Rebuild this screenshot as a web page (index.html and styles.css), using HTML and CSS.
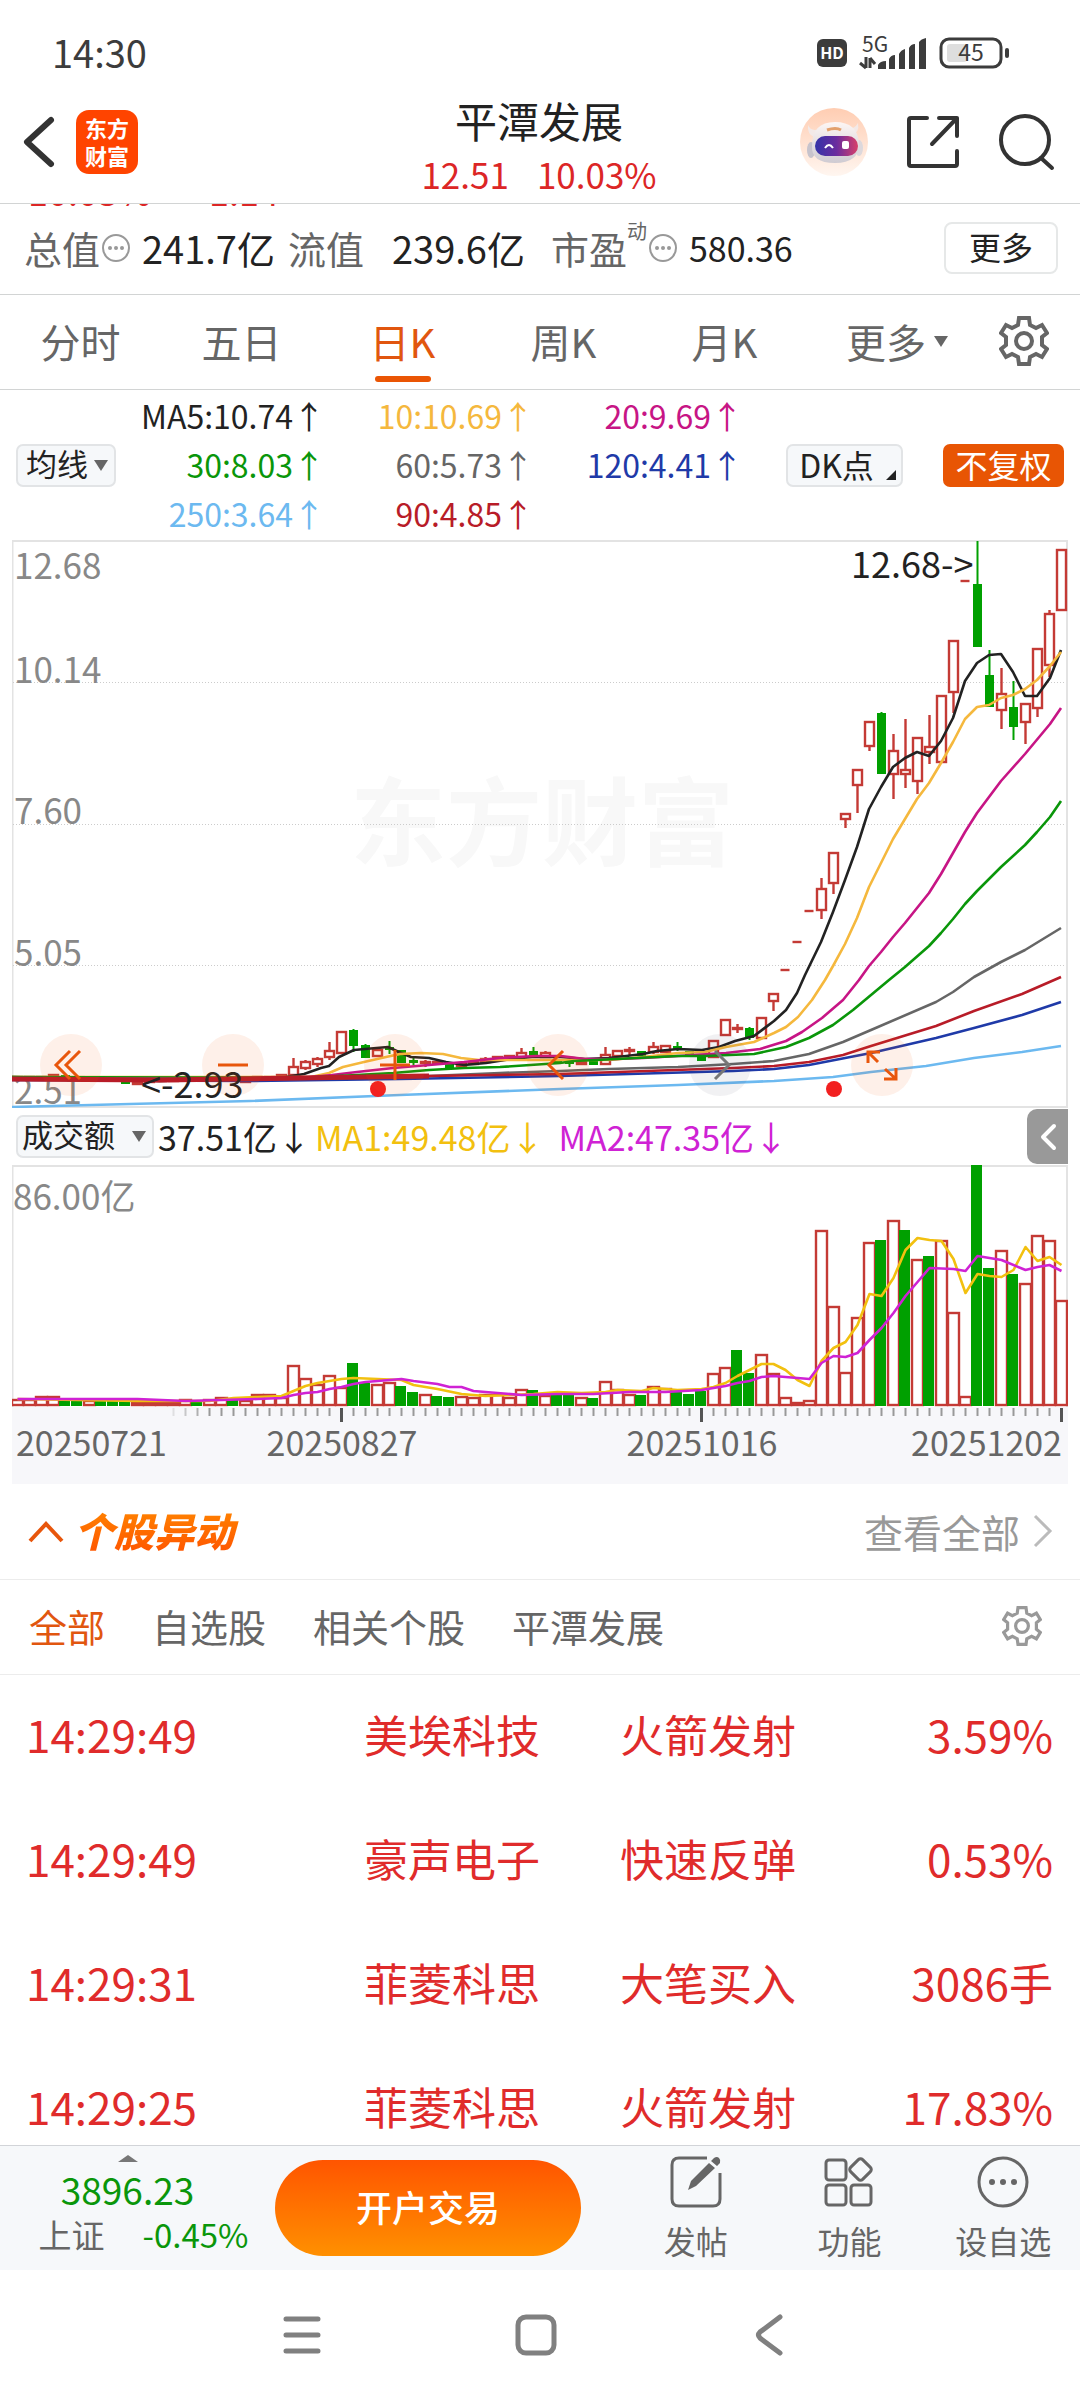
FILE: index.html
```html
<!DOCTYPE html>
<html lang="zh-CN">
<head>
<meta charset="utf-8">
<meta name="viewport" content="width=device-width, initial-scale=1">
<title>平潭发展 12.51 10.03%</title>
<link rel="stylesheet" href="styles.css">
</head>
<body>
<div class="status-bar">
  <time>14:30</time>
  <svg class="status-icons" viewBox="810 30 205 42" aria-hidden="true">
    <rect x="817" y="38" width="30" height="28" rx="6" fill="#3c3c3c"/>
    <text x="832" y="58" font-size="16" font-weight="700" fill="#fff" text-anchor="middle">HD</text>
    <text x="862" y="51" font-size="21" fill="#3c3c3c">5G</text>
    <path d="M866 56v11M860 62l6 5M870 67V57M870 57l5 6" stroke="#3c3c3c" stroke-width="3" fill="none"/>
    <path d="M878 68v-4q2-4 8-4v8zM889 68V58q2-4 6-4v14zM899 68V53q2-4 6-5v20zM909 68V47q2-4 6-4v25zM919 68V41q2-3 7-4v31z" fill="#3c3c3c"/>
    <rect x="947" y="43" width="20" height="18" rx="3" fill="#dedede"/>
    <rect x="941" y="38" width="60" height="28" rx="8" fill="none" stroke="#3c3c3c" stroke-width="3"/>
    <rect x="1005" y="47" width="4" height="10" rx="2" fill="#3c3c3c"/>
    <text x="971" y="60" font-size="23" fill="#3c3c3c" text-anchor="middle">45</text>
  </svg>
</div>

<header class="header">
  <div class="header-left">
    <button class="icon-button" aria-label="返回"><svg width="34" height="54" viewBox="0 0 34 54"><path d="M29 5 5 27l24 22" fill="none" stroke="#333" stroke-width="6" stroke-linecap="round" stroke-linejoin="round"/></svg></button>
    <a class="logo" href="#home"><span>东方</span><span>财富</span></a>
  </div>
  <div class="header-title">
    <h1>平潭发展</h1>
    <p><span>12.51</span><span>10.03%</span></p>
  </div>
  <div class="header-right">
    <button class="icon-button" aria-label="助手">
      <svg width="68" height="68" viewBox="0 0 68 68">
        <defs>
          <linearGradient id="halo" x1="0" y1="0" x2="0" y2="1"><stop offset="0" stop-color="#ffcdb2"/><stop offset="1" stop-color="#fff6f0"/></linearGradient>
          <linearGradient id="visor" x1="0" y1="0" x2="1" y2="0"><stop offset="0" stop-color="#3433a8"/><stop offset=".5" stop-color="#6a2c9e"/><stop offset="1" stop-color="#d8406a"/></linearGradient>
          <linearGradient id="shell" x1="0" y1="0" x2="0" y2="1"><stop offset="0" stop-color="#fdf6f4"/><stop offset="1" stop-color="#cfcbd2"/></linearGradient>
        </defs>
        <circle cx="34" cy="34" r="34" fill="url(#halo)"/>
        <path d="M8 17q3 7 11 4l-5 8q-7-3-6-12zM58 15q2 10-7 12l-5-6q8 1 12-6z" fill="#f3e9e7"/>
        <ellipse cx="11" cy="42" rx="4" ry="8" fill="#c7c3cc"/><ellipse cx="59" cy="40" rx="4" ry="8" fill="#ddd8dc"/>
        <path d="M12 38q0-24 23-24t24 22q0 19-24 19T12 38z" fill="url(#shell)"/>
        <path d="M27 22q9-3 14 0" fill="none" stroke="#e3a06c" stroke-width="3"/>
        <rect x="15" y="28" width="43" height="20" rx="10" fill="url(#visor)"/>
        <path d="M25 40q4-6 8 0" fill="none" stroke="#fff" stroke-width="2"/><rect x="42" y="33" width="7" height="8" rx="2" fill="#fff"/>
      </svg>
    </button>
    <button class="icon-button" aria-label="分享"><svg width="54" height="54" viewBox="0 0 54 54"><g fill="none" stroke="#333" stroke-width="4" stroke-linecap="round" stroke-linejoin="round"><path d="M21 3H5Q3 3 3 5v44q0 2 2 2h44q2 0 2-2V36M33 3h18v18M51 3 26 29"/></g></svg></button>
    <button class="icon-button" aria-label="搜索"><svg width="58" height="58" viewBox="0 0 58 58"><g fill="none" stroke="#333" stroke-width="4" stroke-linecap="round"><circle cx="27" cy="27" r="24"/><path d="m43 45 11 10"/></g></svg></button>
  </div>
</header>

<main class="content">
  <div class="scrolled-row"><span>10.03%</span><span>1.14</span></div>

  <section class="stats">
    <span class="stat-label">总值</span>
    <svg class="info" viewBox="0 0 28 28"><circle cx="14" cy="14" r="13"/><path d="M8 14h.01M14 14h.01M20 14h.01"/></svg>
    <span class="stat-value">241.7亿</span>
    <span class="stat-label">流值</span>
    <span class="stat-value stat-value-wide">239.6亿</span>
    <span class="stat-label stat-label-wide">市盈</span><sup>动</sup>
    <svg class="info" viewBox="0 0 28 28"><circle cx="14" cy="14" r="13"/><path d="M8 14h.01M14 14h.01M20 14h.01"/></svg>
    <span class="stat-value stat-value-small">580.36</span>
    <button class="more">更多</button>
  </section>

  <nav class="periods">
    <button>分时</button><button>五日</button><button class="active">日K</button><button>周K</button><button>月K</button>
    <button class="with-caret">更多</button>
    <button aria-label="设置"><svg width="50" height="50" viewBox="-25 -25 50 50"><path class="gear" d="M-5-23H5l1 7 6 3 6-3 5 8-5 4v8l5 4-5 8-6-3-6 3-1 7H-5l-1-7-6-3-6 3-5-8 5-4v-8l-5-4 5-8 6 3 6-3z"/><circle class="gear" r="8"/></svg></button>
  </nav>

  <section class="averages">
    <label class="picker"><select aria-label="指标"><option>均线</option></select></label>
    <div class="average-grid">
      <span class="ma5">MA5:10.74↑</span><span class="ma10">10:10.69↑</span><span class="ma20">20:9.69↑</span>
      <span class="ma30">30:8.03↑</span><span class="ma60">60:5.73↑</span><span class="ma120">120:4.41↑</span>
      <span class="ma250">250:3.64↑</span><span class="ma90">90:4.85↑</span>
    </div>
    <div class="average-actions">
      <button class="dk">DK点</button>
      <button class="adjust">不复权</button>
    </div>
  </section>

  <section class="chart-box">
    <svg id="price-chart" class="chart" viewBox="12 540 1056 568" role="img" aria-label="日K线图"></svg>
    <div class="chart-tools">
      <button aria-label="快退"><svg viewBox="-31 -31 62 62"><path d="M-1-14-15 0-1 14M9-14-5 0 9 14"/></svg></button>
      <button aria-label="缩小"><svg viewBox="-31 -31 62 62"><path d="M-15 0h30"/></svg></button>
      <button aria-label="放大"><svg viewBox="-31 -31 62 62"><path d="M-15 0h30M0-15v30"/></svg></button>
      <button aria-label="左移"><svg viewBox="-31 -31 62 62"><path d="M5-14-9 0 5 14"/></svg></button>
      <button aria-label="右移" class="disabled"><svg viewBox="-31 -31 62 62"><path d="M-5-14 9 0-5 14"/></svg></button>
      <button aria-label="全屏"><svg viewBox="-31 -31 62 62"><path d="M-14-2v-11h12M-14-13-4-3M14 3v11H2M14 14 3 4"/></svg></button>
    </div>
  </section>

  <section class="volume-head">
    <label class="picker picker-wide"><select aria-label="副图指标"><option>成交额</option></select></label>
    <span class="turnover">37.51亿↓</span><span class="vol-ma1">MA1:49.48亿↓</span><span class="vol-ma2">MA2:47.35亿↓</span>
    <button class="collapse" aria-label="收起"><svg width="18" height="28" viewBox="0 0 18 28"><path d="M15 3 4 14l11 11" fill="none" stroke="#fff" stroke-width="4" stroke-linecap="round" stroke-linejoin="round"/></svg></button>
  </section>
  <section class="chart-box">
    <svg id="volume-chart" class="chart" viewBox="12 1165 1056 319" role="img" aria-label="成交额图"></svg>
  </section>

  <section class="moves-head">
    <svg width="36" height="24" viewBox="0 0 36 24" aria-hidden="true"><path d="M2 21 18 4l16 17" fill="none" stroke="#e8560c" stroke-width="4"/></svg>
    <h2>个股异动</h2>
    <a href="#all">查看全部<svg width="22" height="36" viewBox="0 0 22 36" aria-hidden="true"><path d="m3 3 15 15L3 33" fill="none" stroke="#bbb" stroke-width="3"/></svg></a>
  </section>
  <nav class="filters">
    <button class="active">全部</button><button>自选股</button><button>相关个股</button><button>平潭发展</button>
    <button class="filter-settings" aria-label="异动设置"><svg width="40" height="40" viewBox="-25 -25 50 50"><path class="gear" d="M-5-23H5l1 7 6 3 6-3 5 8-5 4v8l5 4-5 8-6-3-6 3-1 7H-5l-1-7-6-3-6 3-5-8 5-4v-8l-5-4 5-8 6 3 6-3z"/><circle class="gear" r="8"/></svg></button>
  </nav>
  <table class="moves">
    <tbody>
      <tr><td>14:29:49</td><td>美埃科技</td><td>火箭发射</td><td>3.59%</td></tr>
      <tr><td>14:29:49</td><td>豪声电子</td><td>快速反弹</td><td>0.53%</td></tr>
      <tr><td>14:29:31</td><td>菲菱科思</td><td>大笔买入</td><td>3086手</td></tr>
      <tr><td>14:29:25</td><td>菲菱科思</td><td>火箭发射</td><td>17.83%</td></tr>
    </tbody>
  </table>
</main>

<footer class="action-bar">
  <a class="index" href="#index">
    <span class="index-caret"></span>
    <strong>3896.23</strong>
    <span class="index-row"><span>上证</span><em>-0.45%</em></span>
  </a>
  <button class="trade">开户交易</button>
  <div class="actions">
    <button><svg viewBox="0 0 52 52"><path d="M37 2H9Q2 2 2 9v34q0 7 7 7h34q7 0 7-7V17"/><path class="solid" d="m18 34 3-9L39 7l6 5-19 18zM41 5l3-3q3-2 5 0t1 5l-3 3z"/></svg>发帖</button>
    <button><svg viewBox="0 0 52 52"><rect x="3" y="4" width="20" height="20" rx="3"/><rect x="3" y="29" width="20" height="20" rx="3"/><rect x="28" y="29" width="20" height="20" rx="3"/><rect x="29" y="5" width="17" height="17" rx="3" transform="rotate(45 37.5 13.5)"/></svg>功能</button>
    <button><svg viewBox="0 0 52 52"><circle cx="26" cy="26" r="24"/><path class="dots" d="M15 26h.01M26 26h.01M37 26h.01"/></svg>设自选</button>
  </div>
</footer>

<nav class="system-nav">
  <button aria-label="最近任务"><svg viewBox="0 0 44 44"><path d="M6 6h32M6 22h32M6 38h32"/></svg></button>
  <button aria-label="主屏幕"><svg viewBox="0 0 44 44"><rect x="4" y="4" width="36" height="36" rx="8"/></svg></button>
  <button aria-label="返回"><svg viewBox="0 0 44 44"><path d="M32 4 12 19q-3 3 0 6l20 15"/></svg></button>
</nav>
<script src="charts.js"></script>
</body>
</html>
```
FILE: styles.css
```css
* { box-sizing: border-box; }

body {
  margin: 0;
  height: 100vh;
  display: flex;
  flex-direction: column;
  background: #fff;
  color: #222;
  font-family: "Noto Sans CJK SC", "Noto Sans", sans-serif;
}

button, select {
  margin: 0;
  padding: 0;
  border: 0;
  background: none;
  color: inherit;
  font: inherit;
}

a { color: inherit; text-decoration: none; }
h1, h2, p { margin: 0; font-weight: 400; }
svg { display: block; flex: none; }

/* Status bar and header */
.status-bar {
  flex: none;
  height: 88px;
  padding: 16px 65px 0 52px;
  display: flex;
  align-items: center;
  justify-content: space-between;
  font-size: 38px;
  line-height: 44px;
  color: #3c3c3c;
}
.status-icons { width: 205px; height: 42px; }

.header {
  flex: none;
  height: 116px;
  padding: 0 24px 0 22px;
  border-bottom: 1px solid #d2d4d4;
  display: grid;
  grid-template-columns: 1fr auto 1fr;
  align-items: center;
}
.header-left, .header-right { display: flex; align-items: center; padding-bottom: 8px; }
.header-left { gap: 20px; }
.header-right { justify-content: flex-end; gap: 38px; }
.header-title { text-align: center; }
.header-title h1 { font-size: 42px; line-height: 56px; }
.header-title p {
  display: flex;
  justify-content: center;
  gap: 28px;
  font-size: 35px;
  line-height: 52px;
  color: #dc2626;
}
.logo {
  width: 62px;
  height: 64px;
  border-radius: 13px;
  background: #ff4400;
  color: #fff;
  display: flex;
  flex-direction: column;
  align-items: center;
  justify-content: center;
  padding-bottom: 2px;
  font-size: 22px;
  font-weight: 700;
  line-height: 28px;
}

/* Scrolling content */
.content { flex: 1; min-height: 0; overflow: hidden; }

.scrolled-row {
  height: 2px;
  padding: 0 28px;
  display: flex;
  align-items: flex-end;
  gap: 58px;
  overflow: hidden;
  font-size: 36px;
  line-height: 32px;
  color: #dc2626;
}

.stats {
  height: 89px;
  padding: 0 22px 5px 24px;
  border-bottom: 1px solid #d2d4d4;
  display: flex;
  align-items: center;
  font-size: 38px;
  line-height: 44px;
  white-space: nowrap;
}
.stat-label { color: #666; }
.stat-value { margin: 0 13px 0 12px; }
.stat-value-wide { margin: 0 26px 0 28px; }
.stat-value-small { font-size: 34px; }
.stats sup { align-self: flex-start; margin-top: 8px; font-size: 20px; line-height: 34px; color: #666; }
.info { width: 28px; height: 28px; margin-left: 2px; fill: none; stroke: #999; stroke-width: 2; }
.info path { stroke-width: 4; stroke-linecap: round; }
.more {
  margin-left: auto;
  width: 114px;
  height: 52px;
  border: 2px solid #e6e8e8;
  border-radius: 8px;
  padding-bottom: 4px;
  font-size: 32px;
  line-height: 40px;
}

.periods {
  height: 95px;
  padding-right: 16px;
  border-bottom: 1px solid #d2d4d4;
  display: grid;
  grid-template-columns: repeat(5, 1fr) 178px 81px;
  color: #666;
  font-size: 40px;
  line-height: 86px;
}
.periods button { display: flex; align-items: center; justify-content: center; padding-bottom: 2px; }
.periods .active { position: relative; color: #e1560f; }
.periods .active::after {
  content: "";
  position: absolute;
  bottom: 7px;
  left: 50%;
  width: 56px;
  height: 6px;
  margin-left: -28px;
  border-radius: 3px;
  background: #ea5504;
}
.periods .with-caret { padding-left: 6px; }
.with-caret::after {
  content: "";
  margin-left: 8px;
  border: 7px solid transparent;
  border-top: 11px solid #666;
  border-bottom: 0;
}
.gear { fill: none; stroke: currentColor; stroke-width: 4; }

/* Moving averages */
.averages {
  height: 150px;
  padding: 1px 16px 0;
  display: flex;
  align-items: center;
  justify-content: space-between;
}
.picker { position: relative; width: 100px; height: 43px; }
.picker select {
  display: block;
  width: 100%;
  height: 100%;
  padding: 0 0 5px 8px;
  appearance: none;
  border: 2px solid #e2e4e6;
  border-radius: 7px;
  background: #f6f8fa;
  font-size: 31px;
  line-height: 34px;
}
.picker::after {
  content: "";
  position: absolute;
  right: 8px;
  top: 16px;
  border: 7px solid transparent;
  border-top: 11px solid #666;
  border-bottom: 0;
  pointer-events: none;
}
.picker-wide { width: 138px; }
.picker-wide select { padding-left: 4px; }
.average-grid {
  flex: 0 1 627px;
  display: grid;
  grid-template-columns: repeat(3, 1fr);
  grid-auto-rows: 49px;
  font-size: 32px;
  line-height: 46px;
  text-align: right;
  white-space: nowrap;
}
.ma5 { color: #222; }
.ma10 { color: #f5b83d; }
.ma20 { color: #c71585; }
.ma30 { color: #0a960a; }
.ma60 { color: #666; }
.ma120 { color: #1f3aa8; }
.ma250 { color: #6cb9f0; }
.ma90 { color: #b81c28; }
.average-actions { flex: 1; display: flex; justify-content: flex-end; gap: 40px; }
.dk, .adjust { height: 43px; border-radius: 7px; font-size: 32px; line-height: 34px; padding-bottom: 4px; }
.dk {
  position: relative;
  width: 117px;
  padding-right: 16px;
  border: 2px solid #e2e4e6;
  background: #f6f8fa;
}
.dk::after {
  content: "";
  position: absolute;
  right: 5px;
  bottom: 5px;
  border-left: 10px solid transparent;
  border-bottom: 10px solid #222;
}
.adjust { width: 121px; background: #e85504; color: #fff; }

/* Charts */
.chart-box { position: relative; margin: 0 12px; }
.chart { width: 100%; height: auto; }
.chart text { font-size: 35px; }
.chart .axis-label { fill: #888; }
.chart .mark-label { fill: #222; font-size: 36px; }
.chart .date-label { fill: #666; font-size: 34px; }
.chart .watermark { fill: #f8f8f8; font-size: 96px; font-weight: 700; }
.chart .line { fill: none; stroke: currentColor; stroke-width: 2.6; stroke-linejoin: round; }
.chart .thick { stroke-width: 5; }
.chart .up { fill: #fff; stroke: #c43a35; stroke-width: 2.4; }
.chart .down { fill: #00a000; stroke: #00a000; stroke-width: 2; }
.chart .frame { fill: none; stroke: #e3e3e3; stroke-width: 2; }
.chart .grid { stroke: #ccc; stroke-dasharray: 1 2; }
.chart .tick { stroke: #999; stroke-width: 2; }
.chart .tick-major { stroke: #555; stroke-width: 3; }

.chart-tools {
  position: absolute;
  left: 28px;
  right: 155px;
  bottom: 12px;
  display: flex;
  justify-content: space-between;
}
.chart-tools button { width: 62px; height: 62px; border-radius: 50%; background: rgba(240, 90, 10, 0.09); color: #e8560c; }
.chart-tools .disabled { background: rgba(60, 60, 80, 0.07); color: #777; }
.chart-tools path { fill: none; stroke: currentColor; stroke-width: 3; }

.volume-head {
  height: 57px;
  margin-right: 12px;
  padding-left: 16px;
  display: flex;
  align-items: center;
  gap: 4px;
  font-size: 34px;
  line-height: 50px;
  white-space: nowrap;
}
.vol-ma1 { color: #f2c00f; }
.vol-ma2 { margin-left: 10px; color: #cf22d4; }
.collapse {
  margin-left: auto;
  width: 41px;
  height: 55px;
  border-radius: 10px 0 0 10px;
  background: #999;
  display: flex;
  align-items: center;
  justify-content: center;
}

/* Stock moves */
.moves-head {
  height: 96px;
  padding: 0 26px 0 28px;
  border-bottom: 1px solid #ececec;
  display: flex;
  align-items: center;
  gap: 10px;
}
.moves-head h2 {
  padding-right: 8px;
  padding-bottom: 4px;
  font-size: 40px;
  font-weight: 900;
  font-style: italic;
  line-height: 56px;
  background: linear-gradient(#ff8a00, #ff4c00);
  background-clip: text;
  -webkit-background-clip: text;
  color: transparent;
}
.moves-head a {
  margin-left: auto;
  padding-bottom: 2px;
  display: flex;
  align-items: center;
  gap: 12px;
  font-size: 39px;
  line-height: 54px;
  color: #999;
}
.filters {
  height: 95px;
  padding: 0 38px 3px 29px;
  border-bottom: 1px solid #ececec;
  display: flex;
  align-items: center;
  gap: 47px;
  font-size: 38px;
  line-height: 56px;
  color: #666;
}
.filters .active { color: #e1560f; }
.filter-settings { margin-left: auto; color: #999; }

.moves {
  width: 100%;
  table-layout: fixed;
  border-collapse: collapse;
  font-size: 44px;
  line-height: 60px;
  color: #e02b2b;
}
.moves td { width: 23.7%; height: 124px; padding: 0 0 6px; }
.moves td:first-child { width: 33.7%; padding-left: 26px; }
.moves td:last-child { width: 18.9%; padding-right: 27px; text-align: right; }

/* Bottom bars */
.action-bar {
  flex: none;
  height: 125px;
  border-top: 1px solid #d2d4d8;
  background: #f6f8fa;
  display: flex;
  align-items: center;
}
.index {
  width: 255px;
  height: 100%;
  padding-top: 9px;
  display: flex;
  flex-direction: column;
  align-items: center;
  color: #0a960a;
}
.index-caret { border: 10px solid transparent; border-top: 0; border-bottom: 7px solid #777; }
.index strong { font-size: 37px; font-weight: 400; line-height: 54px; }
.index-row { display: flex; gap: 38px; padding-left: 32px; font-size: 33px; line-height: 36px; }
.index-row span { color: #666; }
.index-row em { font-style: normal; }
.trade {
  width: 306px;
  height: 96px;
  margin-left: 20px;
  padding-bottom: 4px;
  border-radius: 48px;
  background: linear-gradient(#ff5500, #ff9000);
  color: #fff;
  font-size: 36px;
  font-weight: 500;
}
.actions { flex: 1; padding: 2px 0 0 38px; display: grid; grid-template-columns: repeat(3, 1fr); }
.actions button {
  display: flex;
  flex-direction: column;
  align-items: center;
  gap: 9px;
  color: #666;
  font-size: 32px;
  line-height: 46px;
}
.actions svg { width: 52px; height: 52px; fill: none; stroke: #666; stroke-width: 3; }
.actions .solid { fill: #666; stroke: none; }
.actions .dots { stroke-width: 6; stroke-linecap: round; }

.system-nav {
  flex: none;
  height: 130px;
  padding-right: 8px;
  display: flex;
  align-items: center;
  justify-content: center;
  gap: 190px;
}
.system-nav svg { width: 44px; height: 44px; fill: none; stroke: #808080; stroke-width: 5; stroke-linecap: round; }
```
FILE: charts.js
```js
const NS = "http://www.w3.org/2000/svg";
const STEP = 12;
const FIRST = 17.5;
const xAt = (i) => FIRST + i * STEP;

function add(parent, name, attrs, text) {
  const node = document.createElementNS(NS, name);
  for (const key in attrs) node.setAttribute(key, attrs[key]);
  if (text) node.textContent = text;
  parent.appendChild(node);
  return node;
}

// Candles: direction, body top, body bottom, high, low
const candles = [
  ["u",1077,1078],["u",1077,1078],["u",1077,1078],["u",1075,1077],["d",1076,1078],["d",1077,1078],["u",1078,1079],["d",1078,1079],["d",1078,1080],["d",1081,1083],
  ["u",1082,1084],["u",1081,1082],["u",1080,1081],["u",1080,1081],["u",1079,1080],["d",1079,1080],["u",1079,1080],["u",1079,1080],["d",1080,1081],["u",1081,1082],
  ["u",1077,1078],["u",1077,1078],["u",1075,1077],["u",1067,1075,1058,1075],["u",1062,1068,1060,1070],["u",1059,1064,1057,1067],["u",1051,1057,1042,1060],["u",1032,1053],["d",1031,1045,1029,1052],["d",1046,1057,1044,1058],
  ["u",1050,1056,1048,1057],["d",1048,1049,1041,1054],["d",1051,1062],["d",1061,1062,1057,1065],["u",1062,1063,1060,1067],["u",1062,1063],["d",1065,1067,1064,1069],["u",1064,1066],["u",1062,1064],["u",1059,1062,1057,1063],
  ["u",1057,1060],["u",1056,1058],["u",1053,1057,1048,1058],["d",1052,1056,1047,1057],["u",1053,1057,1051,1058],["d",1060,1062],["d",1062,1063,1060,1067],["u",1062,1064],["d",1061,1064],["u",1055,1064,1047,1065],
  ["u",1051,1056],["u",1050,1051,1047,1055],["d",1052,1055],["u",1047,1052,1042,1054],["u",1046,1052],["d",1047,1048,1042,1051],["d",1052,1054],["d",1055,1060],["u",1041,1057],["u",1020,1035],
  ["u",1028,1029,1024,1033],["d",1029,1037,1027,1040],["u",1018,1038],["u",994,1001,994,1011],["-",970],["-",942],["-",911],["u",889,910,878,919],["u",853,883,853,894],["u",814,819,814,828],
  ["u",770,785,770,813],["u",722,746,722,751],["d",714,773,712,774],["u",751,774,734,799],["u",770,774,719,788],["u",738,781,738,794],["u",747,752,715,764],["u",696,762],["u",641,692,641,713],["-",581],
  ["d",585,646,541,647],["d",676,706,650,707],["u",694,710,668,729],["d",708,726,681,740],["u",704,722,704,744],["u",649,708,649,717],["u",614,665,610,677],["u",550,610]
];

const averages = [
  ["ma250","12,1107 130,1104 250,1101 400,1095 560,1089 678,1085 774,1081 833,1077 871,1072 926,1066 974,1058 1022,1052 1061,1046"],
  ["ma120","12,1080 250,1081 400,1079 560,1076 733,1071 774,1069 809,1065 871,1053 936,1038 974,1028 1022,1015 1061,1002"],
  ["ma5","12,1077 160,1081 286,1077 304,1074 321,1068 329,1066 339,1057 354,1050 365,1049 388,1047 401,1053 411,1057 429,1058 446,1062 464,1065 486,1063 511,1059 532,1057 561,1057 585,1059 609,1058 643,1054 657,1051 678,1049 702,1050 719,1047 735,1041 754,1036 774,1021 786,1010 797,993 805,975 821,942 833,912 845,880 857,847 869,809 881,787 893,767 905,758 917,752 929,756 941,741 953,718 965,681 977,663 989,655 1001,654 1013,672 1025,696 1037,696 1050,678 1061,650"],
  ["ma10","12,1077 311,1077 329,1073 343,1067 364,1062 386,1057 400,1054 421,1053 443,1054 461,1058 479,1060 507,1060 536,1060 609,1060 643,1057 678,1053 705,1052 726,1047 754,1042 774,1033 786,1027 798,1017 812,1000 825,980 833,966 845,944 857,918 869,887 881,863 893,839 905,819 917,799 929,783 941,763 953,742 965,719 977,707 989,705 1001,698 1013,695 1025,689 1037,680 1050,666 1061,652"],
  ["ma20","12,1078 300,1078 332,1075 357,1072 393,1068 429,1065 464,1062 500,1058 536,1056 561,1056 585,1059 616,1059 643,1058 678,1056 726,1053 760,1049 786,1041 802,1032 822,1018 843,1000 859,980 869,966 881,952 893,937 905,923 917,908 929,893 941,874 953,853 965,832 977,813 989,797 1001,781 1025,754 1050,724 1061,708"],
  ["ma30","12,1077 300,1078 357,1075 393,1073 429,1070 464,1068 500,1067 560,1063 574,1061 616,1059 678,1056 705,1056 754,1054 786,1047 809,1038 833,1025 853,1010 871,995 889,980 905,967 929,946 941,933 953,919 965,904 977,891 989,879 1001,867 1025,845 1037,832 1050,817 1061,801"],
  ["ma60","12,1078 300,1079 429,1076 500,1073 560,1071 609,1069 678,1067 733,1064 774,1061 809,1054 843,1042 871,1030 936,1002 953,992 974,977 1001,962 1025,950 1061,928"],
  ["ma90 thick","12,1079 160,1080 300,1078 429,1076"],
  ["ma90","429,1076 560,1074 733,1068 774,1066 809,1062 843,1055 871,1046 936,1026 974,1011 1022,994 1061,977"]
];

const price = document.getElementById("price-chart");
add(price, "text", { x: 542, y: 858, class: "watermark", "text-anchor": "middle" }, "东方财富");
add(price, "rect", { x: 12.5, y: 541, width: 1054.5, height: 566, class: "frame" });
[683, 825, 966].forEach((y) => add(price, "line", { x1: 13, x2: 1066, y1: y - 0.5, y2: y - 0.5, class: "grid" }));
[["12.68", 579], ["10.14", 683], ["7.60", 824], ["5.05", 966], ["2.51", 1104]].forEach(([label, y]) =>
  add(price, "text", { x: 14, y, class: "axis-label" }, label));

candles.forEach(([kind, top, bottom, high, low], i) => {
  const x = xAt(i);
  if (kind === "-") {
    add(price, "line", { x1: x - 5, x2: x + 4, y1: top, y2: top, class: "up" });
    return;
  }
  const cls = kind === "u" ? "up" : "down";
  if (high) add(price, "line", { x1: x, x2: x, y1: high, y2: low, class: cls });
  const half = kind === "u" ? 4.5 : 3.5;
  add(price, "rect", { x: x - half, y: top, width: half * 2, height: bottom - top, class: cls });
});
averages.forEach(([cls, points]) => add(price, "polyline", { points, class: "line " + cls }));
add(price, "text", { x: 851, y: 578, class: "mark-label" }, "12.68->");
add(price, "text", { x: 141, y: 1098, class: "mark-label" }, "<-2.93");
[378, 834].forEach((cx) => add(price, "circle", { cx, cy: 1089, r: 8, fill: "#f22020" }));

// Turnover bars: height above the baseline, negative for falling days
const bars = [6,6,9,9,-5,-5,5,-5,-4,-4,3,3,3,3,6,-5,6,8,-5,5,11,11,8,40,27,21,30,18,-42,-22,21,23,-19,-13,11,-9,-8,9,8,11,11,8,16,-15,10,-10,-10,8,-7,24,16,11,-10,19,17,-16,-11,-14,32,38,-55,-32,51,32,8,3,5,175,99,33,88,163,-165,185,-175,146,-149,165,93,9,-240,-137,155,-131,122,170,165,105];
const volumeLines = [
  ["vol-ma1", [[0,6],[10,4],[16,4],[18,7],[20,8],[22,9],[23,14],[24,19],[25,22],[27,26],[28,27],[32,25],[33,20],[35,16],[37,11],[39,9],[41,10],[43,11],[45,13],[47,12],[49,13],[50,15],[52,14],[53,17],[55,15],[57,16],[58,18],[59,22],[60,29],[61,35],[62,41],[63,41],[64,35],[65,25],[66,19],[67,44],[68,57],[69,63],[70,80],[71,111],[72,109],[73,127],[74,155],[75,167],[76,165],[77,164],[78,146],[79,112],[80,131],[81,129],[82,128],[83,135],[84,158],[85,144],[86,148],[87,140]]],
  ["vol-ma2", [[0,6],[10,6],[12,5],[14,4],[20,6],[22,7],[23,10],[24,12],[25,13],[26,16],[27,18],[28,21],[29,23],[31,25],[32,26],[33,24],[35,21],[36,18],[37,18],[38,14],[40,12],[42,10],[45,11],[48,11],[51,13],[54,13],[57,15],[59,19],[60,22],[61,24],[62,28],[63,29],[65,27],[66,26],[67,42],[68,49],[69,48],[70,52],[71,65],[72,77],[73,92],[74,109],[75,123],[76,137],[78,136],[79,134],[80,149],[81,147],[82,145],[84,135],[85,138],[86,140],[87,134]]]
];

const volume = document.getElementById("volume-chart");
const BASE = 1405;
add(volume, "rect", { x: 12, y: 1407, width: 1056, height: 77, fill: "#f7f7fa" });
add(volume, "path", { d: "M12.5 1407V1166H1067V1407", class: "frame" });
add(volume, "text", { x: 13, y: 1210, class: "axis-label" }, "86.00亿");
bars.forEach((value, i) => {
  const h = Math.abs(value);
  const half = value > 0 ? 5.5 : 4.5;
  const x = value > 0 ? xAt(i) - half : xAt(i) - half - 1;
  add(volume, "rect", { x, y: BASE - h + 1, width: half * 2, height: h - 1, class: value > 0 ? "up" : "down" });
});
volumeLines.forEach(([cls, pts]) =>
  add(volume, "polyline", { points: pts.map(([i, h]) => xAt(i) + "," + (BASE - h)).join(" "), class: "line " + cls }));
for (let i = 13; i < bars.length; i++) {
  const major = i % 30 === 27;
  add(volume, "line", { x1: xAt(i), x2: xAt(i), y1: 1408, y2: major ? 1422 : 1416, class: major ? "tick-major" : "tick", opacity: Math.min(1, (i - 12) / 4) });
}
[["20250721", 16, "start"], ["20250827", 342, "middle"], ["20251016", 702, "middle"], ["20251202", 1062, "end"]].forEach(([label, x, anchor]) =>
  add(volume, "text", { x, y: 1456, class: "date-label", "text-anchor": anchor }, label));
```
